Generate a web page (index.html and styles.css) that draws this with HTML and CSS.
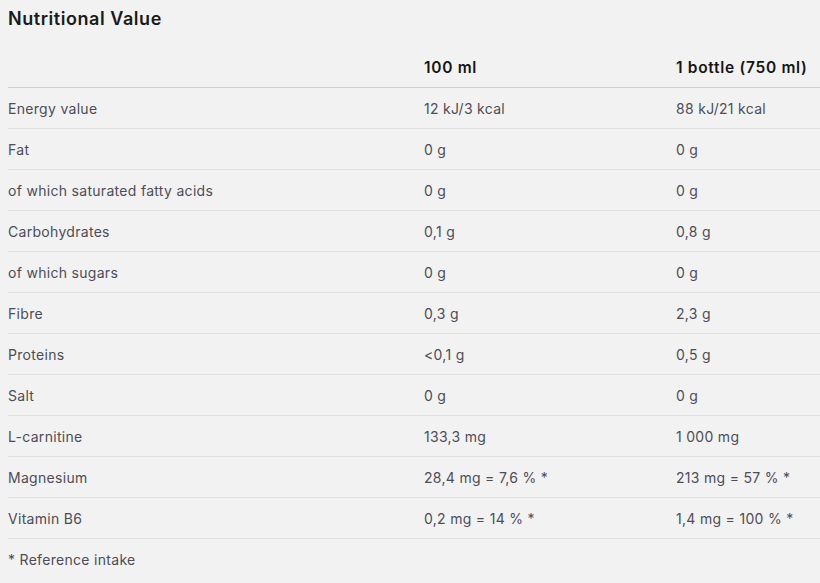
FILE: index.html
```html
<!DOCTYPE html>
<html>
<head>
<meta charset="utf-8">
<link rel="stylesheet" href="styles.css">
</head>
<body>
<div class="wrap">
  <h2 class="title">Nutritional Value</h2>
  <table class="nutri">
    <thead>
      <tr><th class="c1"></th><th class="c2">100 ml</th><th class="c3">1 bottle (750 ml)</th></tr>
    </thead>
    <tbody>
      <tr><td>Energy value</td><td>12 kJ/3 kcal</td><td>88 kJ/21 kcal</td></tr>
      <tr><td>Fat</td><td>0 g</td><td>0 g</td></tr>
      <tr><td>of which saturated fatty acids</td><td>0 g</td><td>0 g</td></tr>
      <tr><td>Carbohydrates</td><td>0,1 g</td><td>0,8 g</td></tr>
      <tr><td>of which sugars</td><td>0 g</td><td>0 g</td></tr>
      <tr><td>Fibre</td><td>0,3 g</td><td>2,3 g</td></tr>
      <tr><td>Proteins</td><td>&lt;0,1 g</td><td>0,5 g</td></tr>
      <tr><td>Salt</td><td>0 g</td><td>0 g</td></tr>
      <tr><td>L-carnitine</td><td>133,3 mg</td><td>1&nbsp;000 mg</td></tr>
      <tr><td>Magnesium</td><td>28,4 mg = 7,6 % *</td><td>213 mg = 57 % *</td></tr>
      <tr><td>Vitamin B6</td><td>0,2 mg = 14 % *</td><td>1,4 mg = 100 % *</td></tr>
    </tbody>
  </table>
  <p class="note">* Reference intake</p>
</div>
</body>
</html>
```
FILE: styles.css
```css
html, body {
  margin: 0;
  padding: 0;
  background: #f2f2f2;
}
body {
  font-family: Inter, "Noto Sans", sans-serif;
  color: #4d4d57;
  overflow: hidden;
}
.wrap {
  padding-left: 8px;
}
.title {
  margin: 8px 0 17px;
  font-size: 18px;
  line-height: 22px;
  font-weight: 600;
  letter-spacing: 0.55px;
  color: #1a1a1a;
}
.nutri {
  width: 812px;
  border-collapse: collapse;
  table-layout: fixed;
}
.nutri th, .nutri td {
  padding: 0;
  height: 40px;
  text-align: left;
  vertical-align: middle;
  font-size: 14px;
  letter-spacing: 0.3px;
  white-space: nowrap;
}
.nutri th {
  font-size: 15.5px;
  font-weight: 600;
  letter-spacing: 0.7px;
  color: #151515;
  border-bottom: 1px solid #cfcfd4;
}
.nutri td {
  border-bottom: 1px solid #e0e0e0;
  font-weight: 400;
}
.c1 { width: 416px; }
.c2 { width: 252px; }
.c3 { width: 144px; }
.note {
  margin: 0;
  height: 41px;
  line-height: 41px;
  font-size: 14px;
  letter-spacing: 0.3px;
}
```
